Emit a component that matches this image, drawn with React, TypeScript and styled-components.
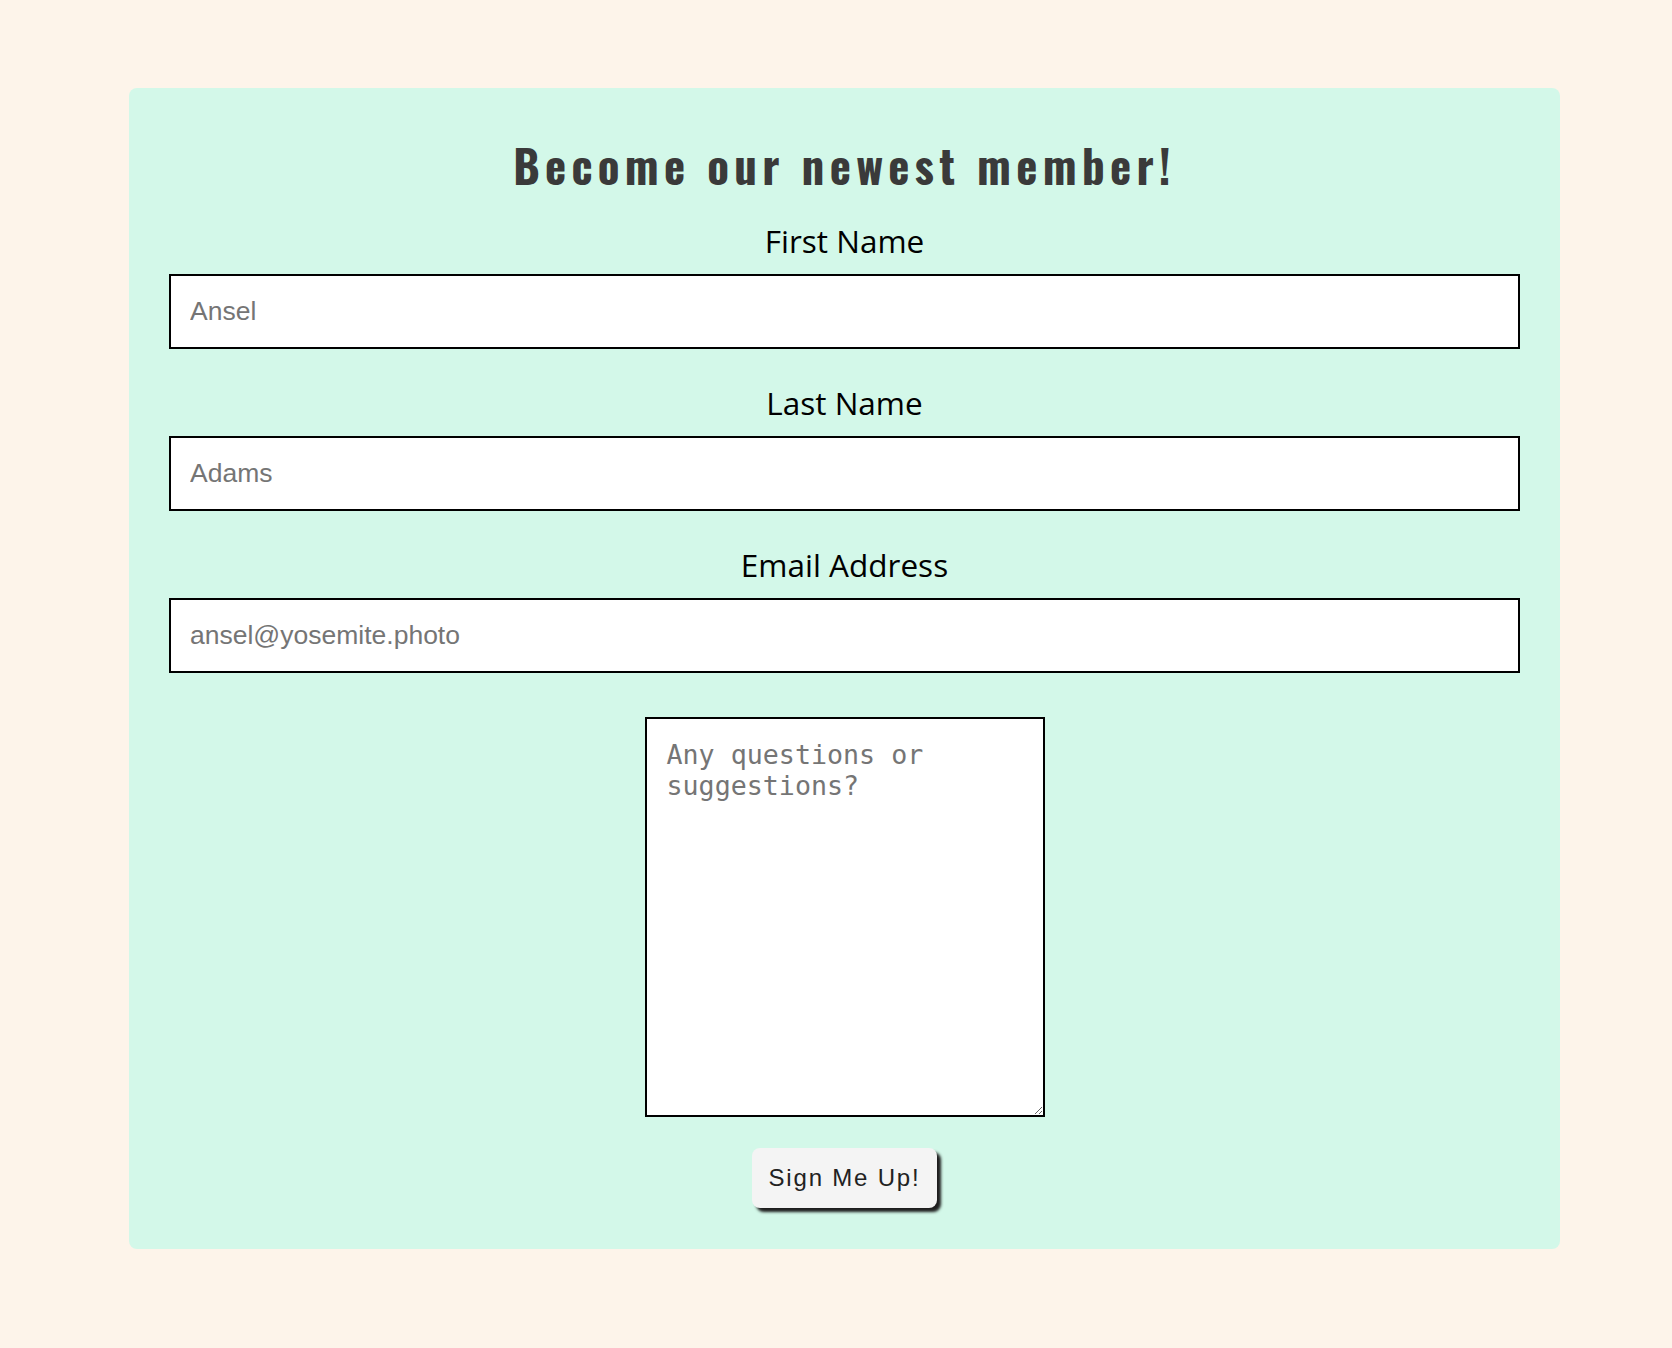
import React from "react";
import styled, { createGlobalStyle } from "styled-components";

const GlobalStyle = createGlobalStyle`
  html, body {
    margin: 0;
    padding: 0;
    background: #fdf4ea;
  }
  * { box-sizing: border-box; }
`;

const Page = styled.div`
  padding: 88px 112px 100px 129px;
`;

const Card = styled.form`
  background: #d3f8e9;
  border-radius: 8px;
  padding: 47px 40px 41px;
  display: flex;
  flex-direction: column;
  align-items: center;
`;

const Title = styled.h1`
  margin: 0 0 24px;
  font-family: "Oswald", "Liberation Sans Narrow", "DejaVu Sans Condensed", sans-serif;
  font-weight: 700;
  font-size: 45px;
  line-height: 60px;
  letter-spacing: 5.3px;
  color: #3a3a3a;
  text-align: center;
`;

const Field = styled.div<{ $last?: boolean }>`
  width: 100%;
  display: flex;
  flex-direction: column;
  align-items: stretch;
  margin-bottom: ${(p) => (p.$last ? "44px" : "32px")};
`;

const Label = styled.label`
  font-family: "Open Sans", sans-serif;
  font-size: 31.5px;
  line-height: 43px;
  color: #000;
  text-align: center;
  margin-bottom: 12px;
`;

const Input = styled.input`
  width: 100%;
  height: 75px;
  border: 2px solid #000;
  background: #fff;
  padding: 0 19px;
  font-family: "Liberation Sans", Arial, sans-serif;
  font-size: 26.5px;
  color: #000;
  outline: none;
  &::placeholder {
    color: #757575;
  }
`;

const TextArea = styled.textarea`
  width: 400px;
  height: 400px;
  border: 2px solid #000;
  background: #fff;
  padding: 20px;
  font-family: "DejaVu Sans Mono", monospace;
  font-size: 26.67px;
  line-height: normal;
  margin: 0 0 31px;
  outline: none;
  &::placeholder {
    color: #757575;
  }
`;

const Button = styled.button`
  width: 185px;
  height: 60px;
  border: none;
  border-radius: 8px;
  background: #f4f4f4;
  box-shadow: 4px 4px 3px #1e1e1e;
  font-family: "Liberation Sans", Arial, sans-serif;
  font-size: 24px;
  letter-spacing: 1.8px;
  color: #222;
  cursor: pointer;
  padding: 0;
`;

export default function App() {
  return (
    <>
      <GlobalStyle />
      <Page>
        <Card onSubmit={(e) => e.preventDefault()}>
          <Title>Become our newest member!</Title>
          <Field>
            <Label htmlFor="first">First Name</Label>
            <Input id="first" type="text" placeholder="Ansel" />
          </Field>
          <Field>
            <Label htmlFor="last">Last Name</Label>
            <Input id="last" type="text" placeholder="Adams" />
          </Field>
          <Field $last>
            <Label htmlFor="email">Email Address</Label>
            <Input id="email" type="email" placeholder="ansel@yosemite.photo" />
          </Field>
          <TextArea placeholder="Any questions or suggestions?" />
          <Button type="submit">Sign Me Up!</Button>
        </Card>
      </Page>
    </>
  );
}
